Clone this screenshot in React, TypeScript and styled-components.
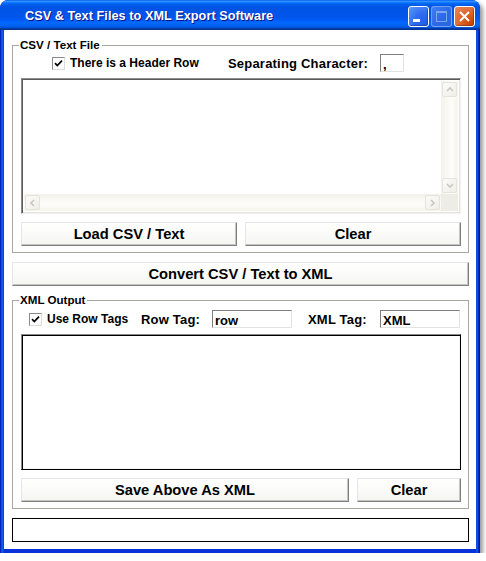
import React from 'react';
import styled, { createGlobalStyle } from 'styled-components';

const Global = createGlobalStyle`
  html, body { margin: 0; padding: 0; background: #ffffff; }
  body { font-family: "Liberation Sans", Arial, sans-serif; color: #000; }
  * { box-sizing: border-box; }
`;

const Window = styled.div`
  width: 480px;
  height: 553px;
  border-radius: 8px 8px 0 0;
  background: linear-gradient(to right, #0019a0 0, #0831d9 1px, #166aee 2px, #0831d9 4px, #0831d9 476px, #166aee 477px, #0831d9 478px, #001090 480px);
  box-shadow: 3px 3px 4px rgba(0, 0, 0, 0.4);
  display: flex;
  flex-direction: column;
  overflow: hidden;
  padding-bottom: 4px;
  position: relative;
  &::after {
    content: '';
  }
`;

const TitleBar = styled.div`
  height: 30px;
  flex: none;
  display: flex;
  align-items: center;
  padding: 0 5px 0 25px;
  border-radius: 8px 8px 0 0;
  background: linear-gradient(#0058ee 0%, #3593ff 4%, #288eff 6%, #127dff 8%, #036ffc 10%, #0262ee 14%, #0057e5 20%, #0054e3 24%, #0055eb 56%, #005bf5 66%, #026afe 76%, #0062ef 86%, #0052d6 92%, #0040ab 94%, #003092 100%);
`;

const Title = styled.div`
  flex: 1;
  color: #fff;
  font-weight: bold;
  font-size: 12.7px;
  letter-spacing: 0.05px;
  text-shadow: 1px 1px #0f1089;
  padding-top: 1px;
`;

const TitleButtons = styled.div`
  display: flex;
  gap: 2px;
  margin-top: 3px;
`;

const TitleButton = styled.div<{ $kind: 'min' | 'max' | 'close' }>`
  width: 21px;
  height: 21px;
  border-radius: 3px;
  border: 1px solid ${p => (p.$kind === 'max' ? 'rgba(170,200,255,0.55)' : '#ffffff')};
  display: flex;
  align-items: center;
  justify-content: center;
  background: ${p =>
    p.$kind === 'close'
      ? 'radial-gradient(circle at 85% 85%, #cc4600 0%, #dc6527 45%, #e8895f 100%)'
      : p.$kind === 'max'
      ? 'linear-gradient(135deg, #3d7ef2 0%, #2a68e6 60%, #2b66de 100%)'
      : 'radial-gradient(circle at 85% 85%, #2160e8 0%, #2d6cf2 45%, #5c98fa 100%)'};
  box-shadow: ${p => (p.$kind === 'max' ? 'none' : 'inset -1px -1px 1px rgba(0,0,40,0.3)')};
`;

const Client = styled.div`
  flex: 1;
  margin: 0 4px;
  background: #ffffff;
  padding: 8px 7px 0 8px;
  display: flex;
  flex-direction: column;
`;

const Group = styled.fieldset<{ $top: number }>`
  margin: 0;
  border: 1px solid #a7a6a0;
  padding: ${p => p.$top}px 7px 6px 8px;
  min-width: 0;
  display: flex;
  flex-direction: column;
`;

const Legend = styled.legend`
  font-weight: bold;
  font-size: 11.6px;
  line-height: 14px;
  padding: 0 2px 0 1px;
  margin-left: -2px;
`;

const Row = styled.div`
  height: 18px;
  display: flex;
  align-items: center;
`;

const Slot = styled.div<{ $w: number; $indent?: number }>`
  width: ${p => p.$w}px;
  padding-left: ${p => p.$indent || 0}px;
  flex: none;
  display: flex;
  align-items: center;
  white-space: nowrap;
`;

const CheckBox = styled.span`
  width: 13px;
  height: 13px;
  flex: none;
  border: 1px solid;
  border-color: #8a8a8a #dcdcdc #dcdcdc #8a8a8a;
  background: #fff;
  display: flex;
  align-items: center;
  justify-content: center;
`;

const CheckText = styled.span`
  font-weight: bold;
  font-size: 12px;
  margin-left: 5px;
`;

const FieldLabel = styled.span`
  font-weight: bold;
  font-size: 13px;
  letter-spacing: 0.2px;
`;

const TextBox = styled.input<{ $w: number }>`
  width: ${p => p.$w}px;
  height: 18px;
  flex: none;
  border: 1px solid;
  border-color: #7f7f7f #e2e2e2 #e2e2e2 #7f7f7f;
  background: #fff;
  font-family: "Liberation Sans", Arial, sans-serif;
  font-weight: bold;
  font-size: 13px;
  padding: 3px 0 0 2px;
  outline: none;
  color: #000;
`;

const Pane = styled.div<{ $dark?: boolean }>`
  margin-top: 6px;
  height: 136px;
  border: 1px solid;
  border-color: ${p => (p.$dark ? '#8a8a8a #000 #000 #8a8a8a' : '#8c8c8c #f2f2f2 #f2f2f2 #8c8c8c')};
  box-shadow: ${p =>
    p.$dark
      ? 'inset 1px 1px 0 #000, inset -1px -1px 0 #f4f4f4'
      : 'inset 1px 1px 0 #5a5a5a, inset -1px -1px 0 #e6e4da'};
  background: #fff;
  padding: 2px;
  display: grid;
  grid-template-columns: 1fr 17px;
  grid-template-rows: 1fr 17px;
`;

const VTrack = styled.div`
  grid-column: 2;
  grid-row: 1;
  background: linear-gradient(to right, #f3f1ea, #fdfdfa 60%, #f5f4ee);
  display: flex;
  flex-direction: column;
  justify-content: space-between;
`;

const HTrack = styled.div`
  grid-column: 1;
  grid-row: 2;
  background: linear-gradient(#f3f1ea, #fdfdfa 60%, #f5f4ee);
  display: flex;
  justify-content: space-between;
`;

const Corner = styled.div`
  grid-column: 2;
  grid-row: 2;
  background: #eeede5;
`;

const ScrollBtn = styled.div`
  width: 17px;
  height: 17px;
  padding: 1px;
  display: flex;
`;

const ScrollFace = styled.div`
  flex: 1;
  border: 1px solid #e4e3dc;
  border-radius: 2px;
  background: linear-gradient(135deg, #fbfbf8, #efeee8);
  display: flex;
  align-items: center;
  justify-content: center;
`;

const ButtonRow = styled.div<{ $cols: string }>`
  margin-top: 8px;
  display: grid;
  grid-template-columns: ${p => p.$cols};
  gap: 8px;
`;

const Button = styled.button<{ $gap?: number }>`
  height: 24px;
  margin: ${p => (p.$gap !== undefined ? `${p.$gap}px 0 0` : '0')};
  border: 1px solid;
  border-color: #e6e6e6 #7e7e7e #7e7e7e #e6e6e6;
  box-shadow: inset -1px -1px 0 #c6c6c2;
  background: linear-gradient(#ffffff, #f5f5f2);
  font-family: "Liberation Sans", Arial, sans-serif;
  font-weight: bold;
  font-size: 14.7px;
  color: #000;
  padding: 0 0 1px;
`;

const Status = styled.div`
  margin-top: 9px;
  height: 24px;
  border: 1px solid #000;
  background: #fff;
`;

const Check = () => (
  <svg width="9" height="9" viewBox="0 0 9 9">
    <path d="M1 4.2 L3.3 6.6 L8 1.6" fill="none" stroke="#000" strokeWidth="1.7" />
  </svg>
);

const Chevron = ({ dir }: { dir: 'up' | 'down' | 'left' | 'right' }) => {
  const d = {
    up: 'M2 6 L5 3 L8 6',
    down: 'M2 3 L5 6 L8 3',
    left: 'M6 2 L3 5 L6 8',
    right: 'M3 2 L6 5 L3 8',
  }[dir];
  return (
    <svg width="10" height="10" viewBox="0 0 10 10">
      <path d={d} fill="none" stroke="#c9c8c0" strokeWidth="1.6" />
    </svg>
  );
};

const SBtn = ({ dir }: { dir: 'up' | 'down' | 'left' | 'right' }) => (
  <ScrollBtn>
    <ScrollFace>
      <Chevron dir={dir} />
    </ScrollFace>
  </ScrollBtn>
);

export default function App() {
  return (
    <>
      <Global />
      <Window>
        <TitleBar>
          <Title>CSV &amp; Text Files to XML Export Software</Title>
          <TitleButtons>
            <TitleButton $kind="min">
              <svg width="19" height="19" viewBox="0 0 19 19">
                <rect x="4" y="12" width="7" height="3" fill="#fff" />
              </svg>
            </TitleButton>
            <TitleButton $kind="max">
              <svg width="19" height="19" viewBox="0 0 19 19">
                <rect x="4.5" y="4.5" width="10" height="10" fill="none" stroke="#7ea6f0" strokeWidth="1" />
                <rect x="4" y="4" width="11" height="2" fill="#7ea6f0" />
              </svg>
            </TitleButton>
            <TitleButton $kind="close">
              <svg width="19" height="19" viewBox="0 0 19 19">
                <path d="M5 5 L14 14 M14 5 L5 14" stroke="#fff" strokeWidth="2" />
              </svg>
            </TitleButton>
          </TitleButtons>
        </TitleBar>
        <Client>
          <Group $top={2}>
            <Legend>CSV / Text File</Legend>
            <Row>
              <Slot $w={207} $indent={31}>
                <CheckBox>
                  <Check />
                </CheckBox>
                <CheckText>There is a Header Row</CheckText>
              </Slot>
              <Slot $w={152}>
                <FieldLabel>Separating Character:</FieldLabel>
              </Slot>
              <TextBox $w={24} defaultValue="," />
            </Row>
            <Pane>
              <div />
              <VTrack>
                <SBtn dir="up" />
                <SBtn dir="down" />
              </VTrack>
              <HTrack>
                <SBtn dir="left" />
                <SBtn dir="right" />
              </HTrack>
              <Corner />
            </Pane>
            <ButtonRow $cols="1fr 1fr">
              <Button>Load CSV / Text</Button>
              <Button>Clear</Button>
            </ButtonRow>
          </Group>
          <Button $gap={9}>Convert CSV / Text to XML</Button>
          <Group $top={3} style={{ marginTop: 7 }}>
            <Legend>XML Output</Legend>
            <Row>
              <Slot $w={120} $indent={8}>
                <CheckBox>
                  <Check />
                </CheckBox>
                <CheckText>Use Row Tags</CheckText>
              </Slot>
              <Slot $w={71}>
                <FieldLabel>Row Tag:</FieldLabel>
              </Slot>
              <TextBox $w={80} defaultValue="row" />
              <Slot $w={88} $indent={16}>
                <FieldLabel>XML Tag:</FieldLabel>
              </Slot>
              <TextBox $w={80} defaultValue="XML" />
            </Row>
            <Pane $dark />
            <ButtonRow $cols="328px 104px">
              <Button>Save Above As XML</Button>
              <Button>Clear</Button>
            </ButtonRow>
          </Group>
          <Status />
        </Client>
      </Window>
    </>
  );
}
